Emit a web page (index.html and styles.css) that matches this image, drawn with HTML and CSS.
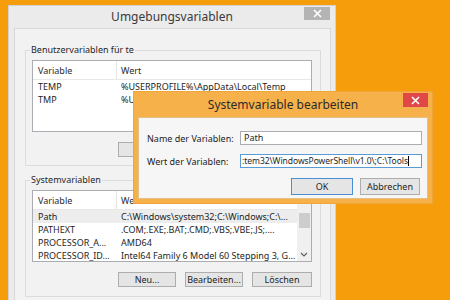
FILE: index.html
```html
<!DOCTYPE html>
<html lang="de">
<head>
<meta charset="utf-8">
<title>Umgebungsvariablen</title>
<link rel="stylesheet" href="styles.css">
</head>
<body>
<div class="win">
  <div class="win-title">
    <span></span>
    <span class="caption">Umgebungsvariablen</span>
    <span class="close close-gray"><svg width="9" height="9" viewBox="0 0 9 9"><path d="M1 1L8 8M8 1L1 8" stroke="#fff" stroke-width="1.6" fill="none"/></svg></span>
  </div>
  <div class="panel">
    <fieldset class="group group-user">
      <legend>Benutzervariablen für te</legend>
      <div class="list">
        <div class="list-main">
          <div class="list-head"><span class="h1">Variable</span><span class="h2">Wert</span></div>
          <div class="row"><span class="c1">TEMP</span><span class="c2">%USERPROFILE%\AppData\Local\Temp</span></div>
          <div class="row"><span class="c1">TMP</span><span class="c2">%USERPROFILE%\AppData\Local\Temp</span></div>
        </div>
      </div>
      <div class="btns">
        <button class="btn">Neu...</button>
        <button class="btn">Bearbeiten...</button>
        <button class="btn btn-wide">Löschen</button>
      </div>
    </fieldset>
    <fieldset class="group group-sys">
      <legend>Systemvariablen</legend>
      <div class="list">
        <div class="list-main">
          <div class="list-head"><span class="h1">Variable</span><span class="h2">Wert</span></div>
          <div class="row row-sel"><span class="c1">Path</span><span class="c2">C:\Windows\system32;C:\Windows;C:\...</span></div>
          <div class="row"><span class="c1">PATHEXT</span><span class="c2">.COM;.EXE;.BAT;.CMD;.VBS;.VBE;.JS;....</span></div>
          <div class="row"><span class="c1">PROCESSOR_A...</span><span class="c2">AMD64</span></div>
          <div class="row"><span class="c1">PROCESSOR_ID...</span><span class="c2">Intel64 Family 6 Model 60 Stepping 3, G...</span></div>
        </div>
        <div class="sbar">
          <div class="sarrow"><svg width="8" height="5" viewBox="0 0 8 5"><path d="M1 4L4 1L7 4" stroke="#606060" stroke-width="1.2" fill="none"/></svg></div>
          <div class="strack"><div class="sthumb"></div></div>
          <div class="sarrow"><svg width="8" height="5" viewBox="0 0 8 5"><path d="M1 1L4 4L7 1" stroke="#606060" stroke-width="1.2" fill="none"/></svg></div>
        </div>
      </div>
      <div class="btns">
        <button class="btn">Neu...</button>
        <button class="btn">Bearbeiten...</button>
        <button class="btn btn-wide">Löschen</button>
      </div>
    </fieldset>
  </div>
</div>

<div class="dlg">
  <div class="dlg-title">
    <span></span>
    <span class="dcaption">Systemvariable bearbeiten</span>
    <span class="close close-red"><svg width="9" height="9" viewBox="0 0 9 9"><path d="M1 1L8 8M8 1L1 8" stroke="#fff" stroke-width="1.6" fill="none"/></svg></span>
  </div>
  <div class="dlg-body">
    <div class="form">
      <span class="flabel">Name der Variablen:</span>
      <div class="field"><span class="ftext">Path</span></div>
      <span class="flabel">Wert der Variablen:</span>
      <div class="field field-focus"><span class="ftext ftext-long">:tem32\WindowsPowerShell\v1.0\;C:\Tools</span><span class="caret"></span></div>
    </div>
    <div class="dbtns">
      <button class="btn dbtn dbtn-ok">OK</button>
      <button class="btn dbtn">Abbrechen</button>
    </div>
  </div>
</div>
</body>
</html>
```

FILE: styles.css
```css
* { box-sizing: border-box; }

body {
  margin: 0;
  width: 450px;
  height: 300px;
  overflow: hidden;
  position: relative;
  background: #F59D0A;
  font-family: "Noto Sans", "Open Sans", sans-serif;
  font-size: 9px;
  color: #1e1e1e;
}

/* main window */
.win {
  margin: 5px 0 0 8px;
  width: 328px;
  height: 310px;
  background: #EBEBEB;
  border: 1px solid #D2D2D2;
  display: flex;
  flex-direction: column;
}

.win-title {
  height: 22px;
  flex: none;
  display: grid;
  grid-template-columns: 1fr auto 1fr;
  align-items: center;
}

.caption {
  font-size: 12px;
  color: #3a3a3a;
  line-height: 16px;
}

.close {
  justify-self: end;
  align-self: start;
  display: flex;
  align-items: center;
  justify-content: center;
}

.close-gray {
  width: 26px;
  height: 13px;
  margin-top: 1px;
  margin-right: 5px;
  background: #B4B4B4;
}

.panel {
  flex: 1;
  margin: 0 4px 0 5px;
  background: #F2F2F2;
  border: 1px solid #D8D8D8;
  display: flex;
  flex-direction: column;
}

/* group boxes */
.group {
  margin: 15px 9px 0 10px;
  padding: 4px 8px 8px 6px;
  border: 1px solid #DCDCDC;
  min-width: 0;
}

.group-sys {
  margin-top: 8px;
  padding-bottom: 9px;
}

.group legend {
  padding: 0 1px;
  margin-left: -2px;
  line-height: 12px;
  font-size: 9px;
  color: #262626;
}

/* list views */
.list {
  height: 72px;
  background: #fff;
  border: 1px solid #ABADB3;
  display: flex;
  overflow: hidden;
}

.list-main {
  flex: 1;
  min-width: 0;
}

.list-head {
  height: 19px;
  display: flex;
  align-items: center;
  border-bottom: 1px solid #E8E8E8;
  color: #2a2a2a;
}

.h1 {
  width: 84px;
  height: 100%;
  display: flex;
  align-items: center;
  padding-left: 5px;
  border-right: 1px solid #E5E5E5;
}

.h2 {
  padding-left: 4px;
}

.row {
  height: 13px;
  line-height: 13px;
  display: flex;
  white-space: nowrap;
}

.row-sel {
  background: #EDEDED;
}

.c1 {
  width: 84px;
  flex: none;
  padding-left: 5px;
  overflow: hidden;
}

.c2 {
  padding-left: 4px;
  overflow: hidden;
}

/* scrollbar */
.sbar {
  width: 14px;
  flex: none;
  background: #F0F0F0;
  display: flex;
  flex-direction: column;
}

.sarrow {
  height: 13px;
  display: flex;
  align-items: center;
  justify-content: center;
}

.strack {
  flex: 1;
  padding: 9px 1px 0 2px;
}

.sthumb {
  height: 15px;
  background: #CDCDCD;
}

/* buttons */
.btns {
  margin-top: 10px;
  display: flex;
  justify-content: flex-end;
  gap: 9px;
}

.btn {
  width: 58px;
  height: 15px;
  padding: 0;
  margin: 0;
  font-family: inherit;
  font-size: 9px;
  line-height: 13px;
  color: #1e1e1e;
  background: #E5E5E5;
  border: 1px solid #ADADAD;
}

.btn-wide {
  width: 60px;
}

/* dialog (overlapping window) */
.dlg {
  position: absolute;
  left: 133px;
  top: 91px;
  width: 300px;
  height: 113px;
  background: #F7B14A;
  border: 1px solid #F0A53A;
  padding: 0 4px 4px 4px;
  display: flex;
  flex-direction: column;
}

.dlg-title {
  height: 25px;
  flex: none;
  display: grid;
  grid-template-columns: 1fr auto 1fr;
  align-items: center;
}

.dcaption {
  font-size: 12px;
  color: #2b2b2b;
  line-height: 16px;
}

.close-red {
  width: 25px;
  height: 14px;
  margin-top: 1px;
  background: #E04848;
}

.dlg-body {
  flex: 1;
  background: #F6F6F6;
  border: 1px solid #E2C08A;
  padding: 13px 5px 0 8px;
  display: flex;
  flex-direction: column;
}

.form {
  display: grid;
  grid-template-columns: 93px 182px;
  grid-auto-rows: 14px;
  row-gap: 9px;
  align-items: center;
}

.flabel {
  color: #222;
  white-space: nowrap;
}

.field {
  height: 14px;
  background: #fff;
  border: 1px solid #ABADB3;
  display: flex;
  align-items: center;
  padding: 0 3px;
  overflow: hidden;
  white-space: nowrap;
}

.field-focus {
  border-color: #5B9BD5;
  padding: 0 2px 0 1px;
}

.ftext {
  line-height: 12px;
  flex: none;
}

.ftext-long {
  font-size: 8.5px;
  letter-spacing: -0.05px;
}

.caret {
  width: 1px;
  height: 10px;
  background: #000;
  flex: none;
}

.dbtns {
  margin-top: 10px;
  margin-right: 2px;
  display: flex;
  justify-content: flex-end;
  gap: 7px;
}

.dbtn {
  width: 60px;
  height: 17px;
}

.dbtn-ok {
  width: 62px;
  border-color: #4A8ED6;
}
```
